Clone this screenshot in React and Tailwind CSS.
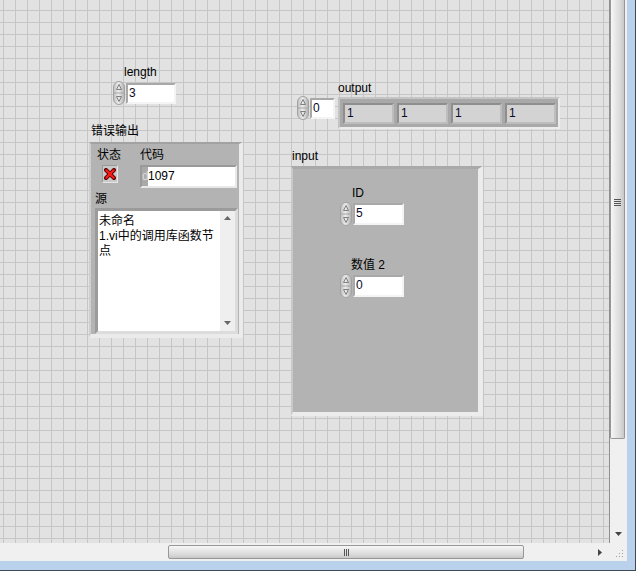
const font = "font-['Liberation_Sans','Noto_Sans_CJK_SC',sans-serif]"

function Spinner() {
  return (
    <svg width="12" height="24" viewBox="0 0 12 24" className="shrink-0">
      <defs>
        <linearGradient id="spin" x1="0" x2="1">
          <stop offset="0" stopColor="#bdbdbd" />
          <stop offset="0.45" stopColor="#ececec" />
          <stop offset="1" stopColor="#b0b0b0" />
        </linearGradient>
      </defs>
      <rect x="0.5" y="0.5" width="11" height="23" rx="5.5" fill="url(#spin)" stroke="#a2a2a2" />
      <line x1="1" y1="12" x2="11" y2="12" stroke="#a6a6a6" />
      <path d="M6 3.5 L8.5 8.5 H3.5 Z" fill="none" stroke="#808080" />
      <path d="M6 20.5 L8.5 15.5 H3.5 Z" fill="none" stroke="#808080" />
    </svg>
  )
}

function Arrow({ dir, color = '#444' }) {
  const d = {
    up: 'M3.5 1 L7 5 H0 Z',
    down: 'M0 1 H7 L3.5 5 Z',
    right: 'M1 0 L5 3.5 L1 7 Z',
  }[dir]
  return (
    <svg width="7" height="7" viewBox="0 0 7 7">
      <path d={d} fill={color} />
    </svg>
  )
}

function NumBox({ value, className }) {
  return (
    <div
      className={`bg-white border-2 border-t-[#a8a8a8] border-l-[#a8a8a8] border-r-[#f4f4f4] border-b-[#f4f4f4] pl-[1px] text-[12px] leading-[16px] text-[#0a0a2a] ${className}`}
    >
      {value}
    </div>
  )
}

function Numeric({ value, className, boxClass }) {
  return (
    <div className={`absolute flex items-center gap-[1px] ${className}`}>
      <Spinner />
      <NumBox value={value} className={boxClass} />
    </div>
  )
}

function Label({ children, className }) {
  return <div className={`absolute text-[12px] leading-[14px] text-black whitespace-nowrap ${className}`}>{children}</div>
}

function ArrayCell() {
  return (
    <div className="w-[51px] h-[21px] bg-[#d3d3d3] border-2 border-t-[#8e8e8e] border-l-[#8e8e8e] border-r-[#bdbdbd] border-b-[#bdbdbd] pl-[2px] text-[12px] leading-[16px] text-[#0a0a2a]">
      1
    </div>
  )
}

function StatusX() {
  return (
    <svg width="12" height="12" viewBox="0 0 12 12">
      <path d="M2 2 L10 10 M10 2 L2 10" stroke="#5a0000" strokeWidth="4" strokeLinecap="round" />
      <path d="M2.3 2.3 L9.7 9.7 M9.7 2.3 L2.3 9.7" stroke="#ff1a1a" strokeWidth="2.2" strokeLinecap="round" />
    </svg>
  )
}

function ErrorCluster() {
  return (
    <div className="absolute left-[89px] top-[142px] w-[154px] h-[196px] bg-[#b3b3b3] border-t-[2px] border-l-[2px] border-r-[4px] border-b-[4px] border-t-[#a2a2a2] border-l-[#cfcfcf] border-r-[#ebebeb] border-b-[#ebebeb]">
      <Label className="left-[6px] top-[4px]">状态</Label>
      <Label className="left-[49px] top-[4px]">代码</Label>
      <div className="absolute left-[11px] top-[21px] w-[16px] h-[18px] bg-[#c9c9c9] border border-t-[#9a9a9a] border-l-[#9a9a9a] border-r-[#e6e6e6] border-b-[#e6e6e6] flex items-center justify-center">
        <StatusX />
      </div>
      <div className="absolute left-[49px] top-[21px] w-[97px] h-[23px] flex border-2 border-t-[#999] border-l-[#999] border-r-[#e8e8e8] border-b-[#e8e8e8]">
        <div className="w-[6px] bg-[#a9a9a9] text-[12px] leading-[18px] text-[#dcdcdc] overflow-hidden">d</div>
        <div className="flex-1 bg-white text-[12px] leading-[18px] text-black">1097</div>
      </div>
      <Label className="left-[4px] top-[48px]">源</Label>
      <div className="absolute left-[4px] top-[64px] w-[143px] h-[126px] flex border-[3px] border-t-[#9b9b9b] border-l-[#9b9b9b] border-r-[#dcdcdc] border-b-[#dcdcdc]">
        <div className="flex-1 bg-white pl-[1px] pt-[3px] text-[12px] leading-[15px] text-black">
          未命名
          <br />
          1.vi中的调用库函数节点
        </div>
        <div className="w-[15px] bg-[#efefef] flex flex-col items-center justify-between py-[4px]">
          <Arrow dir="up" color="#666" />
          <Arrow dir="down" color="#666" />
        </div>
      </div>
    </div>
  )
}

function InputCluster() {
  return (
    <div className="absolute left-[291px] top-[166px] w-[192px] h-[250px] bg-[#b3b3b3] border-t-[3px] border-l-[2px] border-r-[5px] border-b-[4px] border-t-[#a9a9a9] border-l-[#c9c9c9] border-r-[#ececec] border-b-[#ececec]">
      <Label className="left-[59px] top-[17px]">ID</Label>
      <Numeric value="5" className="left-[47px] top-[33px]" boxClass="w-[51px] h-[22px]" />
      <Label className="left-[58px] top-[89px]">数值 2</Label>
      <Numeric value="0" className="left-[47px] top-[105px]" boxClass="w-[51px] h-[22px]" />
    </div>
  )
}

function Canvas() {
  return (
    <div
      className={`relative flex-1 overflow-hidden bg-[#e2e2e2] bg-[linear-gradient(to_right,#c6c6c6_1px,transparent_1px),linear-gradient(to_bottom,#c6c6c6_1px,transparent_1px)] bg-[size:12px_12px] bg-[position:3px_10px] ${font}`}
    >
      <Label className="left-[124px] top-[65px]">length</Label>
      <Numeric value="3" className="left-[113px] top-[81px]" boxClass="w-[50px] h-[21px]" />

      <Label className="left-[91px] top-[124px]">错误输出</Label>
      <ErrorCluster />

      <Label className="left-[338px] top-[81px]">output</Label>
      <Numeric value="0" className="left-[297px] top-[96px]" boxClass="w-[25px] h-[21px]" />
      <div className="absolute left-[338px] top-[97px] w-[222px] h-[32px] flex items-center gap-[3px] pl-[3px] bg-[#a9a9a9] border-2 border-t-[#c4c4c4] border-l-[#c4c4c4] border-r-[#ececec] border-b-[#ececec]">
        <ArrayCell />
        <ArrayCell />
        <ArrayCell />
        <ArrayCell />
      </div>

      <Label className="left-[292px] top-[149px]">input</Label>
      <InputCluster />
    </div>
  )
}

function VScroll() {
  return (
    <div className="w-[18px] flex flex-col bg-[#f0f0f0] border-l border-[#8f8f8f]">
      <div className="h-[439px] mr-[2px] rounded-b-[2px] border border-t-0 border-[#979797] bg-[linear-gradient(to_right,#f6f6f6,#dadada_70%,#c8c8c8)] flex items-center justify-center">
        <div className="flex flex-col gap-[1px] -mt-[33px]">
          <div className="w-[7px] h-[1px] bg-[#555]" />
          <div className="w-[7px] h-[1px] bg-[#555]" />
          <div className="w-[7px] h-[1px] bg-[#555]" />
          <div className="w-[7px] h-[1px] bg-[#555]" />
        </div>
      </div>
      <div className="flex-1" />
      <div className="h-[16px] flex items-center justify-center pb-[2px]">
        <Arrow dir="down" />
      </div>
    </div>
  )
}

function HScroll() {
  return (
    <div className="h-[18px] flex bg-[#f0f0f0]">
      <div className="w-[168px]" />
      <div className="w-[356px] mt-[2px] h-[14px] rounded-[2px] border border-[#979797] bg-[linear-gradient(to_bottom,#f6f6f6,#dadada_70%,#c8c8c8)] flex items-center justify-center gap-[1px]">
        <div className="w-[1px] h-[7px] bg-[#555]" />
        <div className="w-[1px] h-[7px] bg-[#555]" />
        <div className="w-[1px] h-[7px] bg-[#555]" />
      </div>
      <div className="flex-1 flex items-center justify-end pr-[5px]">
        <Arrow dir="right" />
      </div>
      <div className="w-[18px] flex items-end justify-end p-[3px]">
        <svg width="8" height="8" viewBox="0 0 8 8">
          <rect x="6" y="0" width="1" height="1" fill="#a0a0a0" />
          <rect x="3" y="3" width="1" height="1" fill="#a0a0a0" />
          <rect x="6" y="3" width="1" height="1" fill="#a0a0a0" />
          <rect x="0" y="6" width="1" height="1" fill="#a0a0a0" />
          <rect x="3" y="6" width="1" height="1" fill="#a0a0a0" />
          <rect x="6" y="6" width="1" height="1" fill="#a0a0a0" />
        </svg>
      </div>
    </div>
  )
}

export default function App() {
  return (
    <div className="w-[636px] h-[571px] flex bg-[#b9d1ea] border-r border-b border-[#3e4a58] overflow-hidden">
      <div className="w-[627px] h-[561px] flex flex-col">
        <div className="h-[543px] flex">
          <Canvas />
          <VScroll />
        </div>
        <HScroll />
      </div>
    </div>
  )
}
